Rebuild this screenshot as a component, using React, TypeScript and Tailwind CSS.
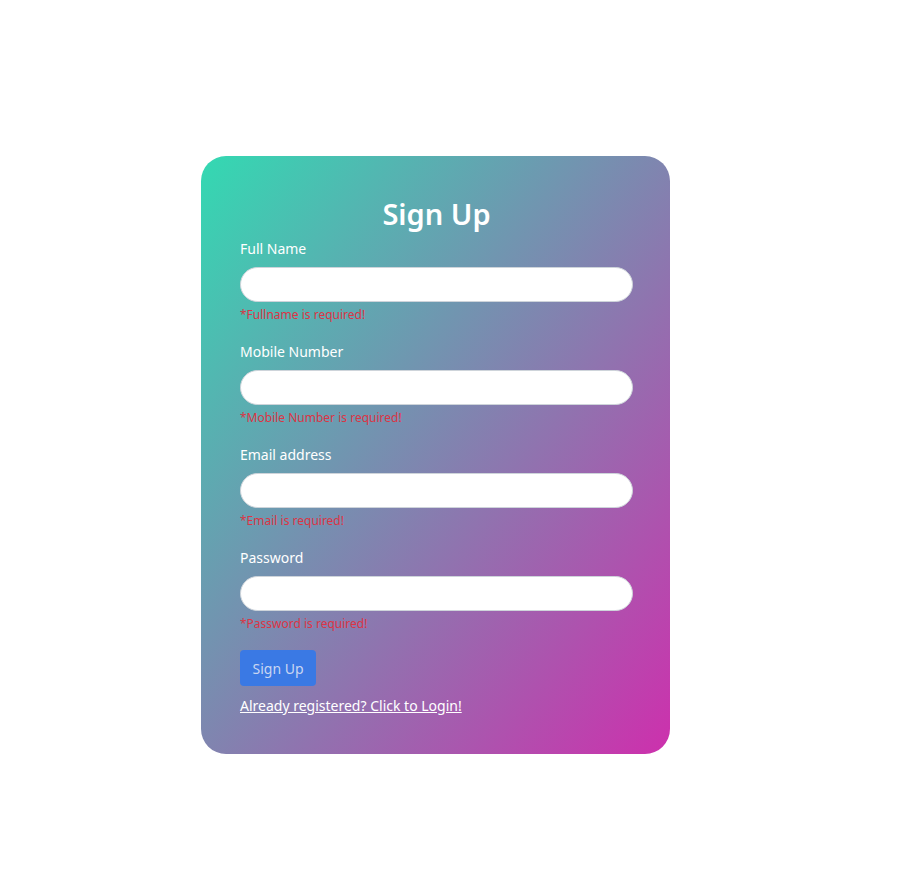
import React from "react";

const fields = [
  { label: "Full Name", type: "text", error: "*Fullname is required!" },
  { label: "Mobile Number", type: "tel", error: "*Mobile Number is required!" },
  { label: "Email address", type: "email", error: "*Email is required!" },
  { label: "Password", type: "password", error: "*Password is required!" },
];

export default function App() {
  return (
    <div className="min-h-screen bg-white pt-[156px] pl-[201px] font-['Noto_Sans',sans-serif]">
      {/* Sign up card */}
      <div className="w-[469px] rounded-[25px] bg-[linear-gradient(to_bottom_right,#33d9b2,#cd30ad)] pl-[39px] pr-[37px] pt-[40px] pb-[36px]">
        <h2 className="text-center text-[29px] font-semibold leading-[35px] text-white">Sign Up</h2>

        <form className="mt-[6px]" onSubmit={(e) => e.preventDefault()}>
          {fields.map((f) => (
            <div key={f.label} className="mb-[16px]">
              <label className="block text-[14px] leading-[24px] text-white">{f.label}</label>
              <input
                type={f.type}
                className="mt-[6px] block h-[35px] w-full rounded-full border border-[#ced4da] bg-white px-3 outline-none"
              />
              <div className="mt-[3px] text-[12px] leading-[19px] text-[#dc3545]">{f.error}</div>
            </div>
          ))}

          <button
            type="submit"
            className="mt-[1px] h-[36px] w-[76px] rounded-[4px] bg-[#3a79e4] text-[14px] text-[#c9d6f2]"
          >
            Sign Up
          </button>

          <a href="#" className="mt-[8px] block w-fit text-[14px] leading-[24px] text-white underline">
            Already registered? Click to Login!
          </a>
        </form>
      </div>
    </div>
  );
}
